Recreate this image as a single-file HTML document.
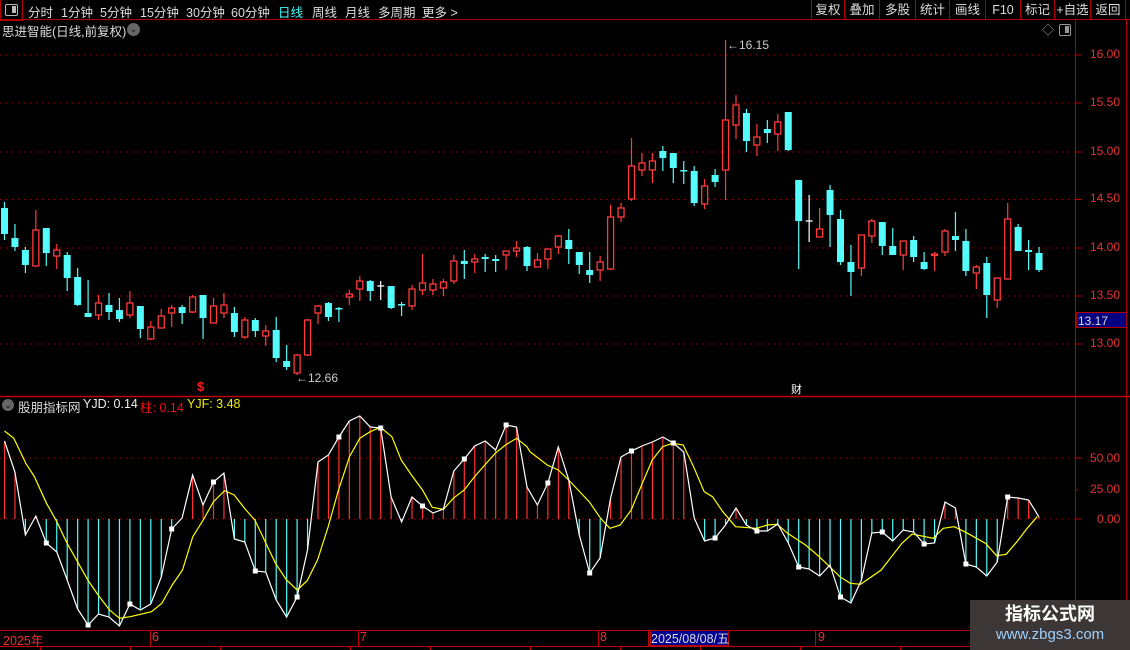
<!DOCTYPE html>
<html><head><meta charset="utf-8">
<style>
*{margin:0;padding:0;box-sizing:border-box}
body{width:1130px;height:650px;background:#000;overflow:hidden;position:relative;font-family:"Liberation Sans","Noto Sans CJK SC",sans-serif;font-size:12px;color:#ccc}
.abs{position:absolute;white-space:nowrap}
.top{position:absolute;left:0;top:0;width:1130px;height:20px;border-bottom:1px solid #b00000}
.btn{position:absolute;top:0;height:20px;border-left:1px solid #b00000;color:#ddd;font-size:12.5px;line-height:20px;text-align:center}
.ax{position:absolute;color:#e83030;font-size:12px;left:1090px}
.wm{position:absolute;left:970px;top:600px;width:160px;height:50px;background:#3d3636;text-align:center}
</style></head><body>
<div class="top"></div>
<div class="abs" style="left:0;top:0;width:23px;height:21px;border:1px solid #b00000;border-top:none"></div>
<div class="abs" style="left:5px;top:4px;width:13px;height:12px;border:1.5px solid #bbb;border-radius:2px"><div style="position:absolute;right:1px;top:1px;width:4px;height:7px;background:#bbb"></div></div>
<div class="abs" style="left:28px;top:2px;font-size:12.5px;color:#ddd">分时</div>
<div class="abs" style="left:61px;top:2px;font-size:12.5px;color:#ddd">1分钟</div>
<div class="abs" style="left:100px;top:2px;font-size:12.5px;color:#ddd">5分钟</div>
<div class="abs" style="left:140px;top:2px;font-size:12.5px;color:#ddd">15分钟</div>
<div class="abs" style="left:186px;top:2px;font-size:12.5px;color:#ddd">30分钟</div>
<div class="abs" style="left:231px;top:2px;font-size:12.5px;color:#ddd">60分钟</div>
<div class="abs" style="left:278px;top:2px;font-size:12.5px;color:#4ff">日线</div>
<div class="abs" style="left:312px;top:2px;font-size:12.5px;color:#ddd">周线</div>
<div class="abs" style="left:345px;top:2px;font-size:12.5px;color:#ddd">月线</div>
<div class="abs" style="left:378px;top:2px;font-size:12.5px;color:#ddd">多周期</div>
<div class="abs" style="left:422px;top:2px;font-size:12.5px;color:#ddd">更多 &gt;</div>
<div class="btn" style="left:811px;width:33px">复权</div>
<div class="btn" style="left:844px;width:35px">叠加</div>
<div class="btn" style="left:879px;width:36px">多股</div>
<div class="btn" style="left:915px;width:34px">统计</div>
<div class="btn" style="left:949px;width:36px">画线</div>
<div class="btn" style="left:985px;width:35px">F10</div>
<div class="btn" style="left:1020px;width:34px">标记</div>
<div class="btn" style="left:1054px;width:36px">+自选</div>
<div class="btn" style="left:1090px;width:36px;border-right:1px solid #b00000">返回</div>

<div class="abs" style="left:2px;top:21px;font-size:12.5px;color:#ddd">思进智能(日线,前复权)</div>
<div class="abs" style="left:127px;top:23px;width:13px;height:13px;border-radius:50%;background:#666;color:#111;font-size:9px;line-height:13px;text-align:center">⌄</div>
<div class="abs" style="left:1042px;top:21px;color:#aaa;font-size:12px">◇</div>
<div class="abs" style="left:1059px;top:24px;width:12px;height:12px;border:1.5px solid #999;border-radius:2px"><div style="position:absolute;right:1px;top:1px;width:4px;height:7px;background:#999"></div></div>

<svg id="c" class="abs" style="left:0;top:0" width="1130" height="650"></svg>

<div class="ax" style="top:47px">16.00</div>
<div class="ax" style="top:95px">15.50</div>
<div class="ax" style="top:144px">15.00</div>
<div class="ax" style="top:191px">14.50</div>
<div class="ax" style="top:240px">14.00</div>
<div class="ax" style="top:288px">13.50</div>
<div class="ax" style="top:336px">13.00</div>
<div class="abs" style="left:1076px;top:312px;width:51px;height:16px;background:#000080;color:#ddd;font-size:12px;line-height:16px;padding-left:1px;border:1px solid #b00000">13.17</div>
<div class="ax" style="top:451px">50.00</div>
<div class="ax" style="top:482px">25.00</div>
<div class="ax" style="top:512px;left:1097px">0.00</div>

<div class="abs" style="left:727px;top:38px;color:#ccc;font-size:12px">←16.15</div>
<div class="abs" style="left:296px;top:371px;color:#ccc;font-size:12px">←12.66</div>
<div class="abs" style="left:197px;top:379px;color:#f02020;font-size:13px;font-weight:bold">$</div>
<div class="abs" style="left:791px;top:381px;color:#fff;font-size:11px">财</div>

<div class="abs" style="left:2px;top:399px;width:12px;height:12px;border-radius:50%;background:#666;color:#111;font-size:9px;line-height:12px;text-align:center">⌄</div>
<div class="abs" style="left:18px;top:397px;color:#ddd;font-size:12.5px">股朋指标网</div>
<div class="abs" style="left:83px;top:397px;color:#eee;font-size:12.5px">YJD: 0.14</div>
<div class="abs" style="left:140px;top:397px;color:#f01010;font-size:12.5px">柱: 0.14</div>
<div class="abs" style="left:187px;top:397px;color:#f0f000;font-size:12.5px">YJF: 3.48</div>

<div class="abs" style="left:3px;top:630px;color:#f03030;font-size:12.5px">2025年</div>
<div class="abs" style="left:152px;top:630px;color:#f03030;font-size:12.5px">6</div>
<div class="abs" style="left:360px;top:630px;color:#f03030;font-size:12.5px">7</div>
<div class="abs" style="left:600px;top:630px;color:#f03030;font-size:12.5px">8</div>
<div class="abs" style="left:650px;top:630px;width:79px;height:16px;background:#000090;color:#ddd;font-size:12.5px;line-height:16px;border:1px solid #b00000">2025/08/08/五</div>
<div class="abs" style="left:818px;top:630px;color:#f03030;font-size:12.5px">9</div>

<div class="wm"><div style="color:#fff;font-weight:bold;font-size:18px;margin-top:3px;line-height:22px">指标公式网</div><div style="color:#9cd0ff;font-size:15px;line-height:20px">www.zbgs3.com</div></div>

<script>
var s='';
function L(x1,y1,x2,y2,c,w,d){s+='<line x1="'+x1+'" y1="'+y1+'" x2="'+x2+'" y2="'+y2+'" stroke="'+c+'" stroke-width="'+(w||1)+'"'+(d?' stroke-dasharray="'+d+'"':'')+'/>';}
[55,103,152,199.5,248,296,344].forEach(function(y){L(0,y,1075,y,'#a00000',1,'1.5 4.5');L(1075,y,1082,y,'#b00000',1)});
[458,519].forEach(function(y){L(0,y,1075,y,'#a00000',1,'1.5 4.5');L(1075,y,1082,y,'#b00000',1)});
L(1075,490,1078,490,'#b00000',1);
L(0,396.5,1130,396.5,'#c00000',1.5);
L(1075.5,20,1075.5,646,'#b00000',1);
L(1126.5,20,1126.5,646,'#b00000',1);
L(0,630.5,1130,630.5,'#c00000',1);
L(0,646.5,1130,646.5,'#c00000',1);
[150,358,598,648,728,815].forEach(function(x){L(x+0.5,630,x+0.5,646,'#c00000',1)});
[40,130,220,350,430,530,620,700,800,900].forEach(function(x){L(x+0.5,646,x+0.5,650,'#c00000',1)});
var C=[['c',208,234,202,240],['c',238,247,224,251],['c',250,265,247,273],['r',230,266,210,266],['c',228,253,228,266],['r',250,256,244,269],['c',255,278,252,291],['c',277,305,268,306],['c',313,317,280,317],['r',303,315,295,320],['c',305,312,293,320],['c',310,319,298,322],['r',303,315,291,318],['c',306,329,306,338],['r',327,339,321,340],['r',316,328,309,328],['r',308,313,305,327],['c',307,313,305,324],['r',297,312,295,313],['c',295,318,295,339],['r',306,323,298,323],['r',305,313,293,318],['c',313,332,307,337],['r',320,337,317,339],['c',320,331,318,337],['r',331,336,325,346],['c',330,358,317,362],['c',361,367,345,370],['r',355,373,354,375],['r',320,355,319,356],['r',306,313,305,324],['c',303,317,302,321],['c',308,309,307,322],['r',294,297,290,305],['r',281,289,276,301],['c',281,291,280,301],['w',286,287,281,300],['c',286,308,286,309],['c',304,305,302,316],['r',289,306,285,310],['r',283,290,254,295],['r',284,290,279,295],['r',282,288,279,296],['r',261,281,255,284],['c',261,264,250,279],['r',259,262,254,273],['c',257,259,254,272],['c',259,261,255,272],['r',251,255,251,270],['r',248,251,241,257],['c',247,266,246,271],['r',260,267,253,267],['r',249,259,249,269],['r',236,247,235,254],['c',240,249,229,264],['c',252,265,252,274],['c',270,275,252,283],['r',262,270,256,281],['r',217,269,205,270],['r',208,217,203,222],['r',166,199,138,201],['r',163,170,153,176],['r',161,170,153,183],['c',151,158,146,171],['c',153,168,153,183],['c',170,171,161,184],['c',171,203,166,206],['r',186,204,179,209],['c',175,182,169,187],['r',120,170,40,200],['r',105,125,95,139],['c',113,141,109,152],['r',137,145,124,156],['c',129,133,120,143],['r',122,134,114,151],['c',112,150,112,151],['c',180,221,180,269],['w',221,222,195,242],['r',229,237,208,237],['c',190,215,185,247],['c',219,262,210,265],['c',262,272,245,296],['r',235,268,235,276],['r',221,236,219,243],['c',222,246,222,255],['c',246,255,228,255],['r',241,255,241,270],['c',240,257,236,262],['c',262,269,252,270],['r',254,255,252,271],['r',231,252,229,256],['c',236,240,212,251],['c',241,271,229,276],['r',267,273,265,289],['c',263,295,257,318],['r',278,300,278,308],['r',219,279,203,279],['c',227,251,224,251],['c',250,252,240,270],['c',253,270,247,272]];
function X(i){return 4.5+i*10.45;}
C.forEach(function(k,i){var x=X(i);var col=k[0]=='c'?'#54fcfc':k[0]=='r'?'#ff3a3a':'#ffffff';
 L(x,k[3],x,k[4],col,1.2);
 var h=Math.max(k[2]-k[1],1.5);
 if(k[0]=='c') s+='<rect x="'+(x-3.5)+'" y="'+k[1]+'" width="7" height="'+h+'" fill="'+col+'"/>';
 else if(k[0]=='r') s+='<rect x="'+(x-3)+'" y="'+k[1]+'" width="6" height="'+h+'" fill="#000" stroke="'+col+'" stroke-width="1.3"/>';
 else L(x-3.5,k[1],x+3.5,k[1],col,1.3);
});
var W=[441,472,535,516,543,552,580,609,625,614,617,626,604,610,604,577,529,518,475,505,482,473,539,542,571,572,600,617,597,550,462,455,437,421,416,427,428,497,522,497,506,513,509,471,459,446,441,450,425,427,487,505,483,447,480,535,573,558,498,457,451,446,442,437,443,452,518,541,538,525,508,525,531,531,524,543,567,569,576,565,597,603,580,533,532,541,530,532,544,543,502,508,564,567,576,562,497,498,500,517];
var Z=519;
W.forEach(function(y,i){var x=X(i);if(Math.abs(y-Z)<2)return;L(x,Z,x,y,y<Z?'#ff3030':'#54fcfc',1.2);});
var p=W.map(function(y,i){return X(i).toFixed(1)+','+y}).join(' ');
var y8=[[13,63],[40,85],[75,160],[100,200],[135,280],[165,335],[195,400],[225,455],[255,510],[285,555],[318,600],[347,625],[378,620],[440,605],[470,580],[500,525],[530,480],[560,380],[590,330],[620,275],[652,242],[680,255],[710,295],[740,330],[770,395],[800,460],[832,510],[863,540],[892,512],[922,450],[953,350],[983,240],[1015,140],[1045,85],[1075,65],[1105,52],[1138,80],[1165,150],[1195,195],[1227,240],[1255,292],[1288,298],[1316,265],[1348,240],[1378,200],[1408,165],[1438,130],[1468,105],[1500,85],[1530,110]];
var y9=[[0,125],[50,165],[82,180],[112,210],[172,275],[205,325],[232,355],[262,345],[294,300],[324,225],[355,150],[385,110],[414,100],[445,105],[475,170],[506,245],[530,260],[560,305],[597,350],[657,355],[690,345],[718,343],[748,370],[800,405],[840,440],[900,500],[930,520],[960,523],[1020,480],[1080,400],[1110,372],[1171,385],[1200,355],[1232,350],[1262,365],[1323,400],[1355,437],[1383,433],[1414,395],[1444,355],[1473,320]];
var yp=y8.map(function(q){return (q[0]/2.904).toFixed(1)+','+(410+q[1]/3).toFixed(1)}).concat(y9.map(function(q){return (530+q[0]/2.904).toFixed(1)+','+(410+q[1]/3).toFixed(1)})).join(' ');
s+='<polyline points="'+yp+'" fill="none" stroke="#ffff00" stroke-width="1.2"/>';
s+='<polyline points="'+p+'" fill="none" stroke="#ffffff" stroke-width="1.2"/>';
for(var i=4;i<100;i+=4){s+='<rect x="'+(X(i)-2.5)+'" y="'+(W[i]-2.5)+'" width="5" height="5" fill="#fff"/>';}
document.getElementById('c').innerHTML=s;
</script>
</body></html>
